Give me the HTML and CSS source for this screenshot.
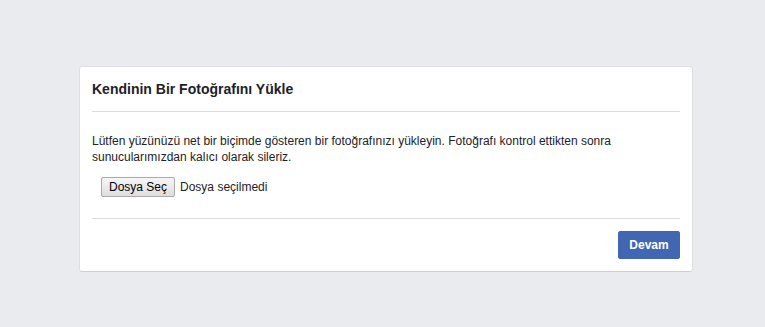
FILE: index.html
```html
<!DOCTYPE html>
<html>
<head>
	<title>Kendinin Bir Fotoğrafını Yükle</title>
	<link rel="stylesheet" href="styles.css">
</head>
<body>
	<div class="page">
		<form class="card">
			<div class="card_header">
				<h2>Kendinin Bir Fotoğrafını Yükle</h2>
			</div>
			<div class="card_body">
				<p>Lütfen yüzünüzü net bir biçimde gösteren bir fotoğrafınızı yükleyin. Fotoğrafı kontrol ettikten sonra sunucularımızdan kalıcı olarak sileriz.</p>
				<div class="file_row">
					<span class="file_button">Dosya Seç</span>
					<span class="file_name">Dosya seçilmedi</span>
				</div>
			</div>
			<div class="card_footer">
				<button type="submit" class="btn_primary">Devam</button>
			</div>
		</form>
	</div>
</body>
</html>
```

FILE: styles.css
```css
html, body { margin: 0; padding: 0; }
body { background: #e9ebee; font-family: "Liberation Sans", Arial, sans-serif; color: #1d2129; font-size: 12px; }

.page { padding: 66px 0 0 79px; }

.card { width: 612px; background: #fff; border: 1px solid #dddfe2; border-bottom-color: #ccd0d5; border-radius: 3px; }

.card_header { margin: 0 12px; padding: 13px 0; border-bottom: 1px solid #dadde1; }
.card_header h2 { margin: 0; font-size: 14px; line-height: 18px; font-weight: bold; color: #1d2129; }

.card_body { margin: 0 12px; padding: 21px 0 21px; border-bottom: 1px solid #dadde1; }
.card_body p { margin: 0; line-height: 16px; }

.file_row { display: flex; align-items: center; gap: 5px; margin: 12px 0 0 9px; }
.file_button { display: inline-block; padding: 2px 7px; line-height: 14px; font-size: 12px; color: #000; background: linear-gradient(#f6f6f6, #dedede); border: 1px solid #a9a9a9; border-radius: 2px; }
.file_name { color: #1d2129; }

.card_footer { display: flex; justify-content: flex-end; padding: 12px 12px 12px; }
.btn_primary { width: 62px; height: 28px; padding: 0; font-family: inherit; font-size: 12px; font-weight: bold; color: #fff; background: #4267b2; border: 1px solid #4267b2; border-radius: 2px; }
```
